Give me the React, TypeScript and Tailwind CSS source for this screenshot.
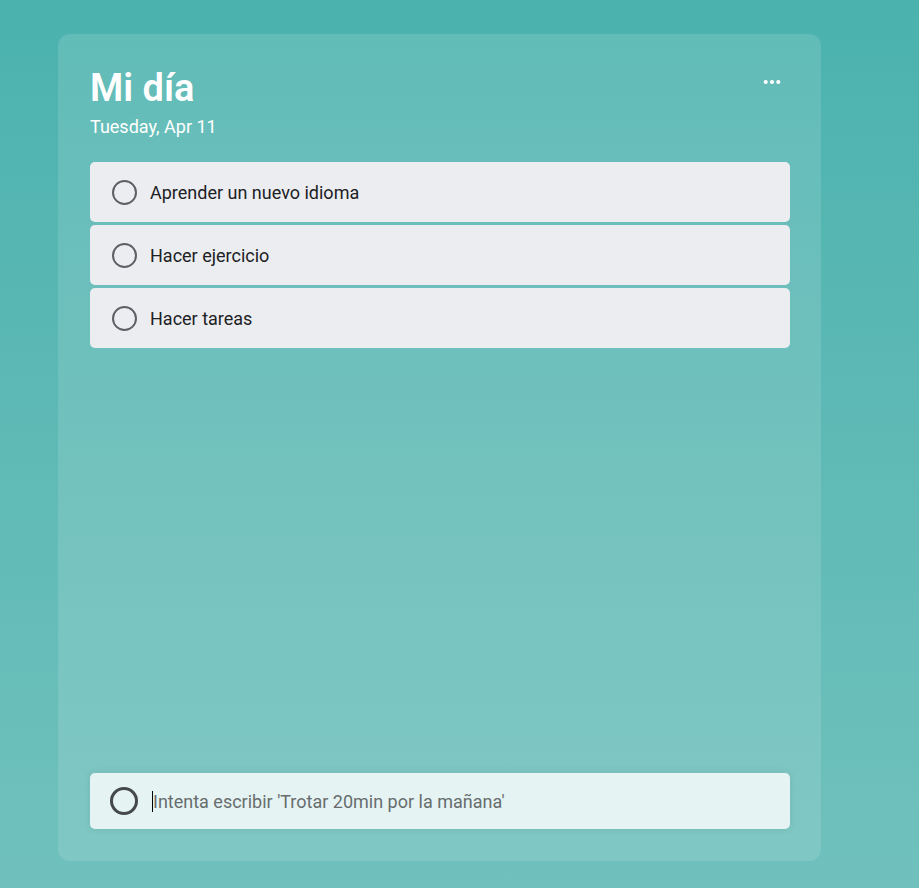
const tasks = ["Aprender un nuevo idioma", "Hacer ejercicio", "Hacer tareas"];

export default function App() {
  return (
    <main className="min-h-screen bg-linear-to-b from-[#4bb2ae] to-[#70c1bd] pt-[34px] pr-[98px] pb-[27px] pl-[58px] font-[Roboto,sans-serif] text-lg">
      <section className="flex min-h-[calc(100vh-61px)] flex-col rounded-xl bg-white/12 p-8 pr-[31px]">
        <header className="flex items-start justify-between text-white">
          <div>
            <h1 className="text-[38px] leading-11 font-semibold">Mi día</h1>
            <p className="mt-1 pt-px leading-6">Tuesday, Apr 11</p>
          </div>
          <button type="button" aria-label="Opciones" className="mt-1.5 mr-2 flex">
            <svg viewBox="0 0 20 20" className="size-5" fill="currentColor">
              <circle cx="3.7" cy="10" r="2.1" />
              <circle cx="10" cy="10" r="2.1" />
              <circle cx="16.3" cy="10" r="2.1" />
            </svg>
          </button>
        </header>
        <ul className="mt-[23px] flex flex-col gap-[3px]">
          {tasks.map((task) => (
            <li key={task}>
              <label className="flex h-15 items-center gap-[13px] rounded-[5px] bg-[#ecedf1] pl-[22px] text-[#202124]">
                <input
                  type="checkbox"
                  className="size-[25px] appearance-none rounded-full border-2 border-[#5f6065] checked:bg-[#5f6065]"
                />
                <span className="pt-0.5">{task}</span>
              </label>
            </li>
          ))}
        </ul>
        <form className="mt-auto flex h-14 items-center rounded-[5px] bg-[#e5f3f3] pl-5 shadow-[0_0_8px_rgba(0,0,0,0.08)]">
          <span className="size-7 shrink-0 rounded-full border-3 border-[#46494b]" />
          <span aria-hidden="true" className="ml-3.5 h-[21px] w-px shrink-0 bg-black" />
          <input
            type="text"
            aria-label="Nueva tarea"
            placeholder="Intenta escribir 'Trotar 20min por la mañana'"
            className="min-w-0 flex-1 pt-0.5 text-[#202124] outline-none placeholder:text-[#676d6e]"
          />
        </form>
      </section>
    </main>
  );
}
